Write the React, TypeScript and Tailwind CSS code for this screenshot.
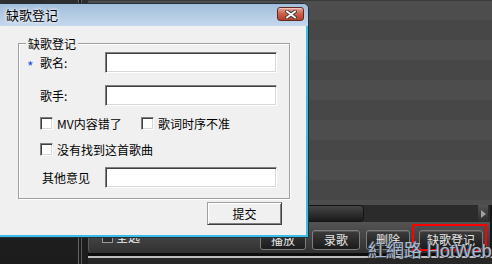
import React from "react";

const cjk = "font-['Noto_Sans_CJK_SC','Liberation_Sans',sans-serif]";

const sunken =
  "bg-white border border-t-[#808080] border-l-[#808080] border-r-[#ffffff] border-b-[#ffffff] shadow-[inset_1px_1px_0_#404040,inset_-1px_-1px_0_#d8d8d8]";

const Checkbox = () => <div className={`h-[13px] w-[13px] shrink-0 ${sunken}`} />;

const Field = () => <div className={`h-[21px] w-[172px] shrink-0 ${sunken}`} />;

const DarkButton = ({ label, w, ml }: { label: string; w: string; ml: string }) => (
  <div
    className={`${w} ${ml} flex h-[20px] shrink-0 items-center justify-center rounded-[3px] border border-[#7d7d7d] bg-gradient-to-b from-[#3c3c3c] to-[#1b1b1b] text-[12px] leading-none text-[#e8e8e8] shadow-[inset_0_1px_0_#555]`}
  >
    {label}
  </div>
);

function Stripes() {
  const rows = Array.from({ length: 10 });
  return (
    <div className="flex h-[205px] shrink-0 flex-col">
      {rows.map((_, i) => (
        <div key={i} className={`h-[20px] shrink-0 ${i % 2 === 0 ? "bg-[#4d4d4d]" : "bg-[#474747]"} ${i === 0 ? "border-t border-[#3a3a3a]" : ""}`} />
      ))}
      <div className="h-[5px] shrink-0 bg-[#4d4d4d]" />
    </div>
  );
}

function Dialog() {
  return (
    <div className="absolute left-[-4px] top-[3px] flex h-[235px] w-[313px] flex-col rounded-t-[6px] border border-[#25313d] bg-[#c3d8ee]">
      {/* title bar */}
      <div className="flex h-[22px] shrink-0 items-start justify-between rounded-t-[5px] bg-gradient-to-b from-[#a2bedb] to-[#c4d8ed] pl-[9px] pr-[4px]">
        <span className="mt-[3px] text-[13px] leading-[16px] text-black [text-shadow:0_0_5px_#fff,0_0_3px_#fff]">缺歌登记</span>
        <div className="mt-[3px] flex h-[14px] w-[27px] items-center justify-center rounded-[3px] border border-[#5e2a22] bg-gradient-to-b from-[#e5a291] via-[#cc5d47] to-[#b3402b] shadow-[inset_0_1px_0_#f3c6bb]">
          <svg width="12" height="9" viewBox="0 0 12 9">
            <path d="M2 1.5 L10 7.5 M10 1.5 L2 7.5" stroke="#3b3b3b" strokeWidth="3.6" strokeLinecap="square" />
            <path d="M2 1.5 L10 7.5 M10 1.5 L2 7.5" stroke="#ffffff" strokeWidth="1.8" strokeLinecap="square" />
          </svg>
        </div>
      </div>

      {/* client */}
      <div className="flex flex-1 flex-col border-b-2 border-r-2 border-[#3bbde6] bg-[#f0f0f0] text-[12px] leading-none text-black">
        <div className="relative ml-[21px] mt-[17px] h-[156px] w-[272px] border border-[#a0a0a0] pl-[8px] pt-[8px] shadow-[inset_1px_1px_0_#fff,1px_1px_0_#fff]">
          <span className="absolute left-[7px] top-[-8px] bg-[#f0f0f0] px-[2px] leading-[15px]">缺歌登记</span>

          <div className="flex h-[21px] items-center">
            <span className="w-[13px] pt-[6px] text-[14px] text-[#2a4fd8]">*</span>
            <span className="w-[65px]">歌名:</span>
            <Field />
          </div>

          <div className="mt-[12px] flex h-[21px] items-center">
            <span className="w-[13px]" />
            <span className="w-[65px]">歌手:</span>
            <Field />
          </div>

          <div className="mt-[11px] flex h-[13px] items-center">
            <span className="w-[13px]" />
            <div className="flex w-[101px] items-center">
              <Checkbox />
              <span className="ml-[4px]">MV内容错了</span>
            </div>
            <div className="flex items-center">
              <Checkbox />
              <span className="ml-[4px]">歌词时序不准</span>
            </div>
          </div>

          <div className="mt-[13px] flex h-[13px] items-center">
            <span className="w-[13px]" />
            <Checkbox />
            <span className="ml-[4px]">没有找到这首歌曲</span>
          </div>

          <div className="mt-[11px] flex h-[21px] items-center">
            <span className="w-[15px]" />
            <span className="w-[63px]">其他意见</span>
            <Field />
          </div>
        </div>

        <div className="ml-[210px] mt-[3px] flex h-[23px] w-[75px] items-center justify-center border border-b-[#404040] border-l-[#a0a0a0] border-r-[#404040] border-t-[#a0a0a0] bg-[#f0f0f0] shadow-[inset_1px_1px_0_#fff,inset_-1px_-1px_0_#808080]">
          提交
        </div>
      </div>
    </div>
  );
}

export default function App() {
  return (
    <div className={`relative flex h-[264px] w-[492px] overflow-hidden bg-[#262626] ${cjk}`}>
      {/* left sidebar */}
      <div className="flex h-full w-[88px] shrink-0 bg-gradient-to-b from-[#2e2e2e] to-[#1c1c1c]">
        <div className="w-[78px]" />
        <div className="w-[1px] bg-[#666]" />
        <div className="w-[2px] bg-[#1a1a1a]" />
        <div className="w-[1px] bg-[#5a5a5a]" />
      </div>

      {/* main */}
      <div className="flex flex-1 flex-col">
        <Stripes />

        {/* scrollbar */}
        <div className="flex h-[17px] shrink-0 border-r-2 border-[#161616] bg-[#2b2b2b]">
          <div className="w-[276px] rounded-r-[4px] border border-[#141414] bg-gradient-to-b from-[#464646] to-[#1b1b1b]" />
          <div className="w-[114px]" />
          <div className="flex w-[10px] items-center justify-center bg-gradient-to-b from-[#525252] to-[#2c2c2c]">
            <svg width="5" height="8" viewBox="0 0 5 8">
              <path d="M0 0 L5 4 L0 8 Z" fill="#a0a0a0" />
            </svg>
          </div>
        </div>

        {/* bottom panel */}
        <div className="flex h-[31px] shrink-0 items-start rounded-bl-[4px] border-l border-r-2 border-l-[#5a5a5a] border-r-[#161616] bg-gradient-to-b from-[#545454] to-[#313131] pl-[13px] pr-[7px] pt-[8px]">
          <div className="mt-[1px] flex items-center">
            <div className="h-[11px] w-[11px] border border-[#9a9a9a] bg-[#2c2c2c]" />
            <span className="ml-[3px] text-[12px] leading-none text-[#eee]">全选</span>
          </div>
          <div className="flex-1" />
          <DarkButton label="播放" w="w-[46px]" ml="ml-0" />
          <DarkButton label="录歌" w="w-[48px]" ml="ml-[6px]" />
          <DarkButton label="删除" w="w-[44px]" ml="ml-[6px]" />
          <DarkButton label="缺歌登记" w="w-[64px]" ml="ml-[9px]" />
        </div>
        <div className="h-[3px] shrink-0 bg-[#0d0d0d]" />
        <div className="h-[2px] shrink-0 bg-[#bdbdbd]" />
        <div className="flex-1 bg-[#262626]" />
      </div>

      <Dialog />

      {/* annotation */}
      <div className="absolute left-[412px] top-[224px] h-[27px] w-[75px] border-2 border-[#ff0000]" />
      <div className="absolute left-[368px] top-[242px] font-['Liberation_Sans','Noto_Sans_CJK_TC',sans-serif] text-[18px] leading-none text-[#a7bad6] [text-shadow:1px_1px_0_#2a2a2a,-1px_0_0_#555]">
        紅網路 HotWeb
      </div>
    </div>
  );
}
